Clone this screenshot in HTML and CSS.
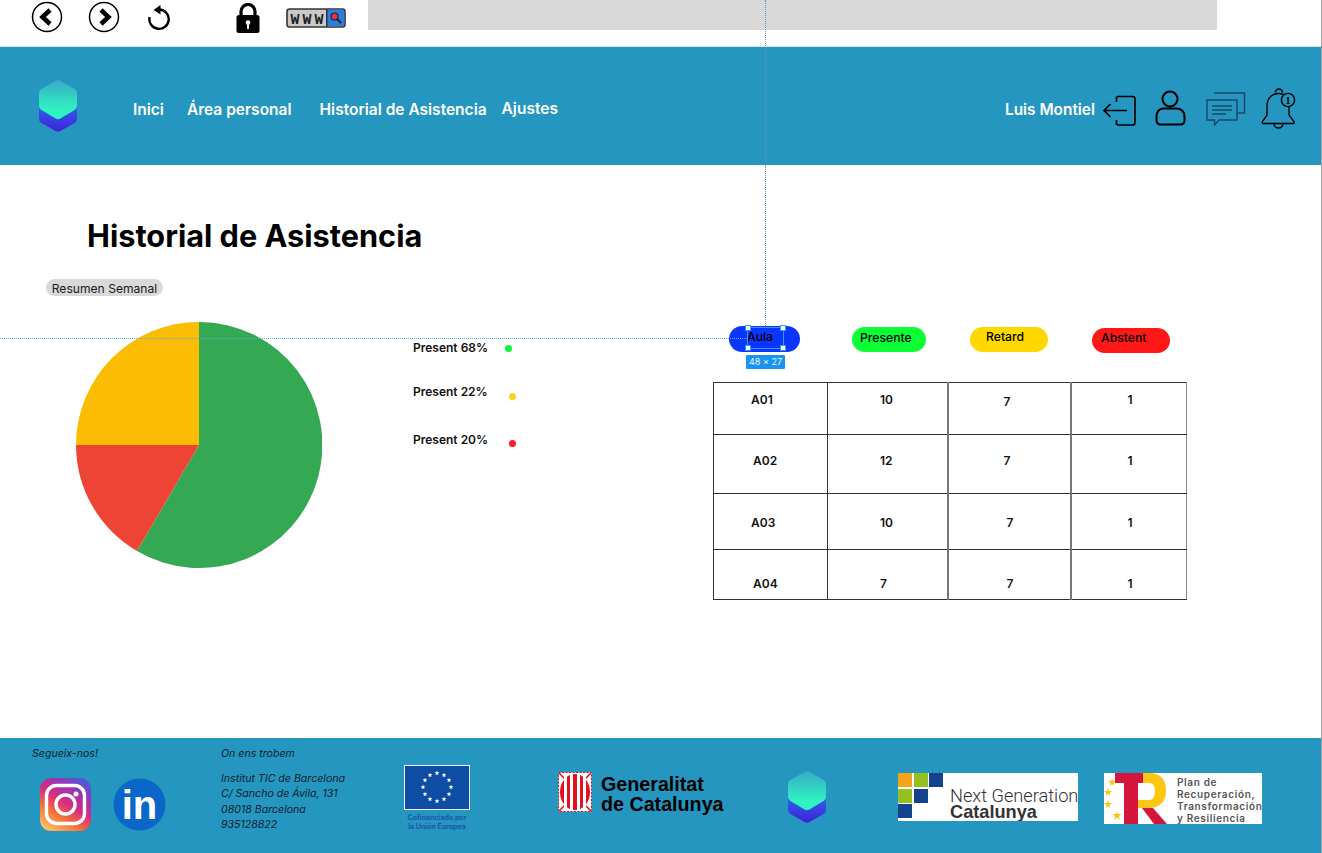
FILE: index.html
```html
<!DOCTYPE html>
<html lang="ca">
<head>
<meta charset="utf-8">
<title>Historial de Asistencia</title>
<link rel="stylesheet" href="styles.css">
</head>
<body>
<svg class="defs" aria-hidden="true">
  <defs>
    <linearGradient id="hexTop" x1="0" y1="0" x2="0" y2="1"><stop offset="0" stop-color="#38abc6"/><stop offset="0.75" stop-color="#2ff2c0"/></linearGradient>
    <linearGradient id="hexBottom" x1="0" y1="0" x2="0" y2="1"><stop offset="0" stop-color="#2f6cf0"/><stop offset="1" stop-color="#3c22d6"/></linearGradient>
    <linearGradient id="igGrad" x1="0.15" y1="1" x2="0.75" y2="0"><stop offset="0" stop-color="#fdc468"/><stop offset="0.3" stop-color="#f4733a"/><stop offset="0.55" stop-color="#d92c80"/><stop offset="0.8" stop-color="#9536b8"/><stop offset="1" stop-color="#4f5bd5"/></linearGradient>
    <symbol id="logo" viewBox="0 0 39 52">
      <path d="M0 21H38V39Q38 41.500 36 42.700L21.500 51Q19 52.300 16.500 51L2 42.700Q0 41.500 0 39Z" fill="url(#hexBottom)"/>
      <path d="M16.500 1Q19 -0.300 21.500 1L36 9.300Q38 10.500 38 13V26Q38 28.500 36 29.700L21.500 38.500Q19 39.800 16.500 38.500L2 29.700Q0 28.500 0 26V13Q0 10.500 2 9.300Z" fill="url(#hexTop)"/>
    </symbol>
    <symbol id="star" viewBox="0 0 10 10"><polygon points="5,0 6.200,3.500 10,3.500 7,5.800 8.100,9.500 5,7.300 1.900,9.500 3,5.800 0,3.500 3.800,3.500" fill="#fff"/></symbol>
  </defs>
</svg>
<div class="page">
  <div class="guide guide-v"></div>
  <div class="guide guide-h"></div>

  <div class="topbar">
    <svg class="ic-back" width="32" height="32" viewBox="0 0 32 32"><circle cx="16" cy="16" r="14.500" fill="none" stroke="#000" stroke-width="1.500"/><path d="M19 9L11.500 16L19 23" fill="none" stroke="#000" stroke-width="4.500"/></svg>
    <svg class="ic-forward" width="32" height="32" viewBox="0 0 32 32"><circle cx="16" cy="16" r="14.500" fill="none" stroke="#000" stroke-width="1.500"/><path d="M13 9L20.500 16L13 23" fill="none" stroke="#000" stroke-width="4.500"/></svg>
    <svg class="ic-reload" width="24" height="26" viewBox="0 0 24 26"><path d="M11 4.500A9.700 9.700 0 1 1 1.600 12" fill="none" stroke="#000" stroke-width="2.400"/><path d="M12.500 0V9.500L5.500 5Z" fill="#000"/></svg>
    <svg class="ic-lock" width="24" height="30" viewBox="0 0 24 30"><path d="M5 13V8.500a7 7 0 0 1 14 0V13" fill="none" stroke="#000" stroke-width="3.200"/><rect x="0.500" y="12" width="23" height="18" rx="2.500" fill="#000"/><circle cx="12" cy="19.500" r="2.300" fill="#fff"/><rect x="11" y="20" width="2" height="6" fill="#fff"/></svg>
    <svg class="ic-www" width="60" height="20" viewBox="0 0 60 20"><rect x="1" y="1" width="58" height="18" rx="2.500" fill="#c9c9c9" stroke="#333" stroke-width="1.600"/><path d="M41 1.800H56.500Q58.200 1.800 58.200 3.500V16.500Q58.200 18.200 56.500 18.200H41Z" fill="#2b7de0"/><rect x="40" y="1" width="1.500" height="18" fill="#333"/><circle cx="48.500" cy="8.500" r="3.500" fill="#e0314f" stroke="#222" stroke-width="1.200"/><path d="M51 11L55 15" stroke="#222" stroke-width="1.800"/><text class="www-text" x="4.500" y="15.500" textLength="33">WWW</text></svg>
    <div class="urlbar"></div>
  </div>

  <header class="navbar">
    <svg class="nav-logo" width="39" height="52"><use href="#logo"/></svg>
    <nav class="nav-links">
      <a class="nav-inici">Inici</a>
      <a class="nav-area">Área personal</a>
      <a class="nav-hist">Historial de Asistencia</a>
      <a class="nav-ajustes">Ajustes</a>
    </nav>
    <div class="nav-user">
      <span class="user-name">Luis Montiel</span>
      <svg class="ic-logout" width="35" height="32" viewBox="0 0 35 32"><path d="M15 1.500H30.500Q33 1.500 33 4V27.500Q33 30 30.500 30H15M14.500 1.500V7M14.500 25V30" fill="none" stroke="#000" stroke-width="1.700"/><path d="M25 15.500H2M8.500 9L2 15.500L8.500 22" fill="none" stroke="#000" stroke-width="1.700"/></svg>
      <svg class="ic-user" width="31" height="36" viewBox="0 0 31 36"><circle cx="15" cy="9" r="7.500" fill="none" stroke="#000" stroke-width="2"/><path d="M9 18.500H21Q29.500 18.500 29.500 27V30Q29.500 34.500 25 34.500H6Q1.500 34.500 1.500 30V27Q1.500 18.500 9 18.500Z" fill="none" stroke="#000" stroke-width="2"/></svg>
      <svg class="ic-chat" width="40" height="34" viewBox="0 0 40 34"><path d="M8 1H38.500V21H32" fill="none" stroke="#1d4a68" stroke-width="1.500"/><path d="M1 8H31V28H13L8.500 33V28H1Z" fill="none" stroke="#1d4a68" stroke-width="1.500"/><path d="M6 14H26M6 18H26M6 22H20" stroke="#1d4a68" stroke-width="1.300"/></svg>
      <svg class="ic-bell" width="36" height="41" viewBox="0 0 36 41"><path d="M14.500 4.500a3.500 3.500 0 0 1 7 0M6 27V18C6 10 11 5.500 18 5.500C19.500 5.500 21 5.800 22.500 6.500M28 16V27L33 33.500Q33.800 35.500 32 35.500H2.500Q0.700 35.500 1.500 33.500L6 27M13 35.500a4.500 4.500 0 0 0 9 0" fill="none" stroke="#000" stroke-width="1.400"/><circle cx="27" cy="12" r="6.600" fill="#2496bf" stroke="#000" stroke-width="1.400"/><text class="bell-num" x="27" y="15.800" text-anchor="middle">1</text></svg>
    </div>
  </header>

  <main class="main">
    <h1 class="title">Historial de Asistencia</h1>
    <span class="summary-pill">Resumen Semanal</span>
    <section class="content">
      <svg class="pie" width="246" height="246" viewBox="0 0 246 246">
        <path d="M123 123L123 0A123 123 0 1 1 61 229Z" fill="#34a853"/>
        <path d="M123 123L61 229A123 123 0 0 1 0 123Z" fill="#ee4436"/>
        <path d="M123 123L0 123A123 123 0 0 1 123 0Z" fill="#fbbc04"/>
      </svg>
      <ul class="legend">
        <li class="legend-item legend-a"><span class="legend-text">Present 68%</span><i class="dot dot-green"></i></li>
        <li class="legend-item legend-b"><span class="legend-text">Present 22%</span><i class="dot dot-yellow"></i></li>
        <li class="legend-item legend-c"><span class="legend-text">Present 20%</span><i class="dot dot-red"></i></li>
      </ul>
      <div class="table-col">
        <div class="pills">
          <span class="pill pill-aula">Aula
            <span class="selection">
              <i class="handle h-tl"></i><i class="handle h-tr"></i><i class="handle h-bl"></i><i class="handle h-br"></i>
              <span class="size-tag">48 × 27</span>
            </span>
          </span>
          <span class="pill pill-presente">Presente</span>
          <span class="pill pill-retard">Retard</span>
          <span class="pill pill-abstent">Abstent</span>
        </div>
        <table class="grid-table">
          <tbody>
            <tr class="row-1"><td>A01</td><td>10</td><td>7</td><td>1</td></tr>
            <tr class="row-2"><td>A02</td><td>12</td><td>7</td><td>1</td></tr>
            <tr class="row-3"><td>A03</td><td>10</td><td>7</td><td>1</td></tr>
            <tr class="row-4"><td>A04</td><td>7</td><td>7</td><td>1</td></tr>
          </tbody>
        </table>
      </div>
    </section>
  </main>

  <footer class="footer">
    <div class="f-social">
      <p class="f-heading">Segueix-nos!</p>
      <div class="f-social-icons">
        <svg width="51" height="53" viewBox="0 0 51 53"><rect width="51" height="53" rx="11" fill="url(#igGrad)"/><rect x="6.500" y="7.500" width="38" height="38" rx="10" fill="none" stroke="#fff" stroke-width="3.400"/><circle cx="25.500" cy="26.500" r="9.500" fill="none" stroke="#fff" stroke-width="3.400"/><circle cx="36" cy="16" r="2.500" fill="#fff"/></svg>
        <svg class="linkedin" width="53" height="53" viewBox="0 0 53 53"><circle cx="26.500" cy="26.500" r="26" fill="#0a66c8"/><text class="in-text" x="26.500" y="41" text-anchor="middle">in</text></svg>
      </div>
    </div>
    <div class="f-address">
      <p class="f-heading">On ens trobem</p>
      <p class="f-lines">Institut TIC de Barcelona<br>C/ Sancho de Ávila, 131<br>08018 Barcelona<br>935128822</p>
    </div>
    <div class="f-eu">
      <svg width="66" height="45" viewBox="0 0 66 45"><rect x="0.500" y="0.500" width="65" height="44" fill="#0e4da4" stroke="#fff"/><use href="#star" x="30.500" y="5.500" width="5" height="5"/><use href="#star" x="37.500" y="7.500" width="5" height="5"/><use href="#star" x="42.500" y="12.500" width="5" height="5"/><use href="#star" x="44.500" y="19.500" width="5" height="5"/><use href="#star" x="42.500" y="26.500" width="5" height="5"/><use href="#star" x="37.500" y="31.500" width="5" height="5"/><use href="#star" x="30.500" y="33.500" width="5" height="5"/><use href="#star" x="23.500" y="31.500" width="5" height="5"/><use href="#star" x="18.500" y="26.500" width="5" height="5"/><use href="#star" x="16.500" y="19.500" width="5" height="5"/><use href="#star" x="18.500" y="12.500" width="5" height="5"/><use href="#star" x="23.500" y="7.500" width="5" height="5"/></svg>
      <p class="eu-text">Cofinanciado por<br>la Unión Europea</p>
    </div>
    <div class="f-gencat">
      <svg width="34" height="40" viewBox="0 0 34 40"><rect x="0.500" y="0.500" width="33" height="39" fill="#fff"/><rect x="0.500" y="0.500" width="33" height="39" fill="none" stroke="#e3101f" stroke-width="1" stroke-dasharray="2 1.500"/><path d="M1 1L7 7M33 1L27 7M1 39L7 33M33 39L27 33" stroke="#e3101f" stroke-width="1.500"/><ellipse cx="17" cy="20" rx="15" ry="18" fill="#e3101f"/><g fill="#fff"><rect x="6" y="2" width="3" height="36"/><rect x="12" y="1" width="3" height="38"/><rect x="19" y="1" width="3" height="38"/><rect x="25" y="2" width="3" height="36"/></g></svg>
      <p class="gencat-text">Generalitat<br>de Catalunya</p>
    </div>
    <svg class="f-logo" width="39" height="52"><use href="#logo"/></svg>
    <div class="f-nextgen">
      <div class="ng-squares">
        <i class="sq sq-orange"></i><i class="sq sq-green"></i><i class="sq sq-blue"></i>
        <i class="sq sq-green"></i><i class="sq sq-blue"></i><i class="sq sq-none"></i>
        <i class="sq sq-blue"></i>
      </div>
      <p class="ng-text"><span class="ng-line1">Next Generation</span><span class="ng-line2">Catalunya</span></p>
    </div>
    <div class="f-plan">
      <svg width="68" height="51" viewBox="0 0 68 51"><g fill="#f8c311"><polygon points="8,5 9,8 12,8 9.500,10 10.500,13 8,11 5.500,13 6.500,10 4,8 7,8"/><polygon points="4,15 5,18 8,18 5.500,20 6.500,23 4,21 1.500,23 2.500,20 0,18 3,18"/><polygon points="4,27 5,30 8,30 5.500,32 6.500,35 4,33 1.500,35 2.500,32 0,30 3,30"/><polygon points="13,38 14,41 17.500,41 14.800,43.200 16,47 13,44.600 10,47 11.200,43.200 8.500,41 12,41"/></g><path d="M11 0H39V10H34V51H20V10H11Z" fill="#d4163c"/><path d="M39 0H45Q62 0 62 17.500Q62 34 46 35H34V27H45Q51 27 51 17.500Q51 10 45 10H39Z" fill="#fbc713"/><path d="M38 35H49L63 51H50Z" fill="#d4163c"/></svg>
      <p class="plan-text">Plan de<br>Recuperación,<br>Transformación<br>y Resiliencia</p>
    </div>
  </footer>
</div>
</body>
</html>
```

FILE: styles.css
```css
* { box-sizing: border-box; }
html, body { margin: 0; padding: 0; }
body { background: #fff; font-family: Inter, "Liberation Sans", sans-serif; color: #000; overflow: hidden; }
.defs { position: absolute; width: 0; height: 0; }
p { margin: 0; }

.page { position: relative; width: 1322px; height: 853px; display: flex; flex-direction: column; border-right: 1px solid #a3a3a3; }

.guide { position: absolute; z-index: 5; }
.guide-v { left: 765px; top: 0; height: 326px; border-left: 1px dotted #5f93bd; }
.guide-h { left: 0; top: 338px; width: 747px; border-top: 1px dotted #4db0f0; }

/* Top bar */
.topbar { height: 47px; flex: none; display: flex; align-items: flex-start; border-bottom: 1px solid #d5e3ea; }
.topbar svg { flex: none; display: block; }
.ic-back { margin: 1px 0 0 31px; }
.ic-forward { margin: 1px 0 0 25px; }
.ic-reload { margin: 5px 0 0 28px; }
.ic-lock { margin: 3px 0 0 64px; }
.ic-www { margin: 8px 0 0 26px; }
.www-text { font: 700 15px "Liberation Mono", monospace; fill: #222; }
.urlbar { width: 849px; height: 30px; margin-left: 22px; background: #d9d9d9; }

/* Nav */
.navbar { height: 118px; flex: none; background: #2496bf; display: flex; align-items: flex-start; }
.nav-logo { display: block; margin: 33px 0 0 39px; flex: none; }
.nav-links { display: flex; margin: 54px 0 0 55px; font-size: 15.500px; line-height: 18px; font-weight: 600; color: #fff; white-space: nowrap; }
.nav-area { margin-left: 23px; }
.nav-hist { margin-left: 28px; }
.nav-ajustes { margin-left: 15px; margin-top: -1px; }
.nav-user { margin-left: auto; display: flex; align-items: flex-start; flex: none; }
.user-name { margin: 54px 0 0 0; font-size: 15.400px; line-height: 18px; font-weight: 600; color: #fff; white-space: nowrap; }
.ic-logout { margin: 48px 0 0 7px; display: block; }
.ic-user { margin: 43px 0 0 18px; display: block; }
.ic-chat { margin: 45px 0 0 20px; display: block; }
.ic-bell { margin: 41px 24px 0 15px; display: block; }
.bell-num { font: 700 10px "Liberation Serif", serif; fill: #000; }

/* Main */
.main { flex: 1; min-height: 0; display: flex; flex-direction: column; align-items: flex-start; }
.title { margin: 52px 0 0 87px; font-size: 30.700px; line-height: 38px; font-weight: 700; white-space: nowrap; }
.summary-pill { margin: 24px 0 0 46px; height: 17px; width: 117px; border-radius: 9px; background: #d9d9d9; font-size: 12.100px; line-height: 19px; text-align: center; color: #1a1a1a; white-space: nowrap; }
.content { display: flex; align-items: flex-start; margin: 26px 0 0 76px; }
.pie { display: block; flex: none; }

.legend { list-style: none; margin: 0 0 0 91px; padding: 0; width: 300px; flex: none; font-size: 12px; line-height: 16px; font-weight: 600; color: #111; }
.legend-item { position: relative; height: 16px; }
.legend-a { margin-top: 18px; }
.legend-b { margin-top: 28px; }
.legend-c { margin-top: 32px; }
.dot { position: absolute; width: 7px; height: 7px; border-radius: 50%; }
.legend-a .dot { left: 92px; top: 5px; }
.legend-b .dot { left: 96px; top: 9px; }
.legend-c .dot { left: 96px; top: 8px; }
.dot-green { background: #10f23c; }
.dot-yellow { background: #ffd21a; }
.dot-red { background: #ff1a26; }

.table-col { flex: none; width: 480px; }
.pills { display: flex; align-items: flex-start; padding-left: 16px; height: 60px; font-size: 12.200px; line-height: 16px; font-weight: 500; }
.pill { position: relative; display: block; height: 25px; border-radius: 13px; color: #000; }
.pill-aula { width: 71px; height: 26px; margin-top: 4px; margin-right: 52px; background: #0a36ff; padding: 3px 0 0 18px; }
.pill-presente { width: 74px; margin-top: 5px; margin-right: 44px; background: #0cff35; padding: 3px 0 0 8px; }
.pill-retard { width: 78px; margin-top: 5px; margin-right: 44px; background: #ffd800; padding: 2px 0 0 16px; }
.pill-abstent { width: 78px; margin-top: 6px; background: #ff1818; padding: 2px 0 0 9px; }

.selection { position: absolute; left: 18px; top: 1px; width: 37px; height: 22px; border: 1px solid #2f9cf4; }
.handle { position: absolute; width: 6px; height: 6px; background: #fff; border: 1px solid #2f9cf4; }
.h-tl { left: -3px; top: -3px; }
.h-tr { right: -3px; top: -3px; }
.h-bl { left: -3px; bottom: -3px; }
.h-br { right: -3px; bottom: -3px; }
.size-tag { position: absolute; left: -2px; top: 27px; width: 39px; height: 14px; border-radius: 1px; background: #1a94f0; color: #e8f5ff; font-size: 9px; font-weight: 400; line-height: 14px; text-align: center; white-space: nowrap; }

.grid-table { border-collapse: collapse; table-layout: fixed; width: 473px; font-size: 12px; line-height: 16px; font-weight: 600; color: #111; }
.grid-table td { border: 1px solid #333; padding: 0; vertical-align: top; text-align: left; }
.grid-table td:nth-child(1) { width: 114px; padding-left: 37px; }
.grid-table td:nth-child(2) { width: 120px; padding-left: 52px; border-right: 2px solid #777; }
.grid-table td:nth-child(3) { width: 123px; padding-left: 55px; border-right: 2px solid #777; }
.grid-table td:nth-child(4) { width: 116px; padding-left: 56px; border-right-color: #888; }
.row-1 td { height: 52px; padding-top: 9px; }
.row-2 td { height: 59px; padding-top: 18px; }
.row-3 td { height: 56px; padding-top: 21px; }
.row-4 td { height: 50px; padding-top: 26px; }
.row-1 td:nth-child(3) { padding-top: 11px; }
.row-2 td:first-child, .row-4 td:first-child { padding-left: 39px; }
.row-3 td:nth-child(3), .row-4 td:nth-child(3) { padding-left: 58px; }

/* Footer */
.footer { height: 115px; flex: none; background: #2496bf; display: flex; align-items: flex-start; color: #0c2230; }
.f-heading { font-size: 10.600px; line-height: 14px; font-style: italic; white-space: nowrap; }
.f-social { margin: 9px 0 0 32px; width: 189px; flex: none; }
.f-social-icons { display: flex; align-items: flex-start; margin: 17px 0 0 8px; }
.f-social-icons svg { display: block; }
.linkedin { margin-left: 22px; }
.in-text { font: 700 40px "Liberation Sans", sans-serif; fill: #fff; }
.f-address { margin-top: 9px; width: 183px; flex: none; }
.f-lines { margin-top: 10px; font-size: 10.600px; line-height: 15.300px; font-style: italic; white-space: nowrap; }
.f-eu { margin-top: 27px; width: 66px; flex: none; }
.f-eu svg { display: block; }
.eu-text { margin-top: 3px; font-size: 7px; line-height: 9px; font-weight: 700; color: #1c55ad; text-align: center; white-space: nowrap; }
.f-gencat { display: flex; margin: 34px 0 0 88px; width: 230px; flex: none; }
.f-gencat svg { display: block; flex: none; }
.gencat-text { margin: 2px 0 0 9px; font: 700 19.700px/20px "Liberation Sans", sans-serif; color: #000; white-space: nowrap; }
.f-logo { display: block; flex: none; margin: 33px 0 0 0; }
.f-nextgen { position: relative; margin: 35px 0 0 71px; width: 180px; height: 48px; background: #fff; flex: none; overflow: hidden; }
.ng-squares { position: absolute; left: 0; top: 0; display: grid; grid-template-columns: repeat(3, 14px); grid-auto-rows: 14px; gap: 1.500px; }
.sq-orange { background: #f5a31a; }
.sq-green { background: #95c11f; }
.sq-blue { background: #15428c; }
.ng-text { position: absolute; left: 52px; top: 15px; color: #333; white-space: nowrap; }
.ng-line1 { display: block; font: 300 18.200px/16px Roboto, sans-serif; }
.ng-line2 { display: block; font: 700 18.200px/17px "Liberation Sans", sans-serif; }
.f-plan { display: flex; margin: 35px 0 0 26px; width: 158px; height: 51px; background: #fff; flex: none; overflow: hidden; }
.f-plan svg { display: block; flex: none; }
.plan-text { margin: 3px 0 0 5px; font-size: 10px; line-height: 12px; font-weight: 600; letter-spacing: 0.650px; color: #555; white-space: nowrap; }
```
